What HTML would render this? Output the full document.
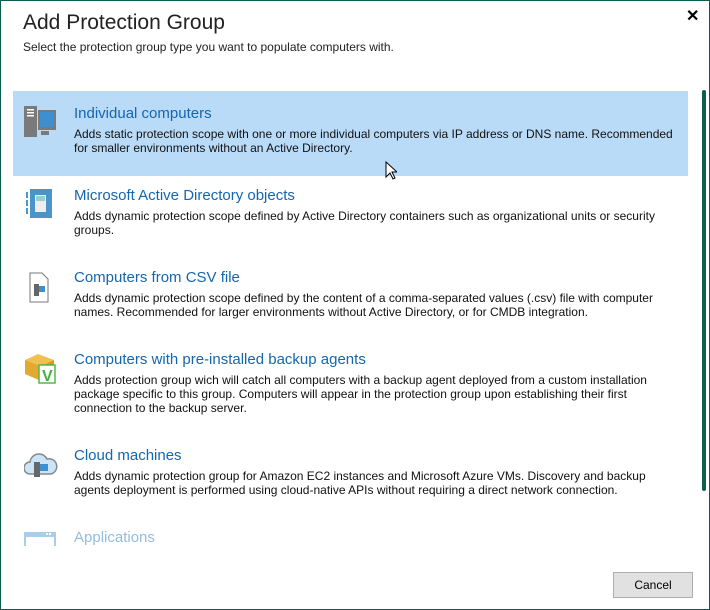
<!DOCTYPE html>
<html><head><style>
body{margin:0;width:710px;height:610px;overflow:hidden;background:#fff;font-family:"Liberation Sans",sans-serif;}
.frame{position:absolute;left:0;top:0;width:708px;height:608px;border:1px solid #0e5e4e;}
.t{position:absolute;left:23px;top:11px;font-size:21px;color:#222;}
.s{position:absolute;left:23px;top:40px;font-size:12px;color:#222;}
.x{position:absolute;left:686px;top:6px;font-size:16px;font-weight:bold;}
.hl{position:absolute;left:13px;top:91px;width:675px;height:85px;background:#b9dbf8;}
.it{position:absolute;left:74px;}
.it h{display:block;font-size:15px;color:#1466ad;height:20px;}
.it p{margin:2px 0 0;font-size:12px;line-height:14px;color:#111;width:606px;}
.ic{position:absolute;left:24px;}
.sb{position:absolute;left:702px;top:90px;width:4px;height:401px;background:#0e5e4e;border-radius:2px;}
.btn{position:absolute;left:613px;top:572px;width:78px;height:24px;border:1px solid #adadad;background:#e1e1e1;font-size:12px;text-align:center;line-height:24px;}
</style></head><body>
<div class="frame"></div>
<div class="t">Add Protection Group</div>
<div class="s">Select the protection group type you want to populate computers with.</div>
<div class="x">✕</div>
<div class="hl"></div>
<div class="sb"></div>

<svg class="ic" style="top:104px" width="32" height="34"><rect x="0" y="2" width="13" height="31" fill="#7a7a7a"/><rect x="3" y="5" width="7" height="1.5" fill="#fff"/><rect x="3" y="8" width="7" height="1.5" fill="#fff"/><rect x="3" y="11" width="7" height="1.5" fill="#fff"/><rect x="14" y="6" width="18" height="20" fill="#7a7a7a"/><rect x="16" y="8" width="14" height="15" fill="#3d8fd0"/><rect x="17" y="27" width="8" height="4" fill="#7a7a7a"/></svg>
<div class="it" style="top:105px"><h>Individual computers</h><p>Adds static protection scope with one or more individual computers via IP address or DNS name. Recommended for smaller environments without an Active Directory.</p></div>

<svg class="ic" style="top:188px" width="30" height="32"><rect x="2" y="4" width="2" height="6" fill="#4a94cc"/><rect x="2" y="12" width="2" height="6" fill="#4a94cc"/><rect x="2" y="20" width="2" height="6" fill="#4a94cc"/><rect x="6" y="1" width="22" height="29" fill="#4a94cc"/><rect x="11" y="7" width="11" height="17" fill="#eee"/><rect x="12" y="8" width="9" height="5" fill="#9cc"/></svg>
<div class="it" style="top:187px"><h>Microsoft Active Directory objects</h><p>Adds dynamic protection scope defined by Active Directory containers such as organizational units or security groups.</p></div>

<svg class="ic" style="top:272px" width="30" height="32"><path d="M6 1h12l6 6v23H6z" fill="#fff" stroke="#777"/><rect x="10" y="12" width="5" height="12" fill="#666"/><rect x="15" y="14" width="6" height="6" fill="#3d8fd0"/></svg>
<div class="it" style="top:269px"><h>Computers from CSV file</h><p>Adds dynamic protection scope defined by the content of a comma-separated values (.csv) file with computer names. Recommended for larger environments without Active Directory, or for CMDB integration.</p></div>

<svg class="ic" style="top:352px" width="34" height="34"><path d="M1 8L14 2 30 8 17 14z" fill="#f0c050"/><path d="M1 8v14l16 7V14z" fill="#e2a830"/><path d="M17 14v15l13-6V8z" fill="#d49a20"/><rect x="15" y="13" width="16" height="18" fill="#fff" stroke="#55b848" stroke-width="1.5"/><text x="18" y="29" font-size="16" font-weight="bold" fill="#44b040" font-family="Liberation Sans">V</text></svg>
<div class="it" style="top:351px"><h>Computers with pre-installed backup agents</h><p>Adds protection group wich will catch all computers with a backup agent deployed from a custom installation package specific to this group. Computers will appear in the protection group upon establishing their first connection to the backup server.</p></div>

<svg class="ic" style="top:450px" width="34" height="30"><path d="M6 24a6 6 0 0 1 0-12 9 9 0 0 1 17-3 7 7 0 0 1 4 15z" fill="#cce4f7" stroke="#888" stroke-width="1.5"/><rect x="10" y="12" width="6" height="15" fill="#666"/><rect x="16" y="14" width="8" height="7" fill="#3d8fd0"/></svg>
<div class="it" style="top:447px"><h>Cloud machines</h><p>Adds dynamic protection group for Amazon EC2 instances and Microsoft Azure VMs. Discovery and backup agents deployment is performed using cloud-native APIs without requiring a direct network connection.</p></div>

<svg class="ic" style="top:532px" width="32" height="14"><rect x="0" y="0" width="32" height="14" fill="#a8cde8"/><rect x="2" y="5" width="28" height="9" fill="#fff"/><rect x="22" y="1" width="2" height="2" fill="#fff"/><rect x="25" y="1" width="2" height="2" fill="#fff"/></svg>
<div class="it" style="top:529px"><h style="color:#92bde0">Applications</h></div>

<svg style="position:absolute;left:385px;top:161px" width="12" height="19"><path d="M1 1v15l4-4 3 6 2-1-3-6h5z" fill="#fff" stroke="#000"/></svg>
<div class="btn">Cancel</div>
</body></html>
